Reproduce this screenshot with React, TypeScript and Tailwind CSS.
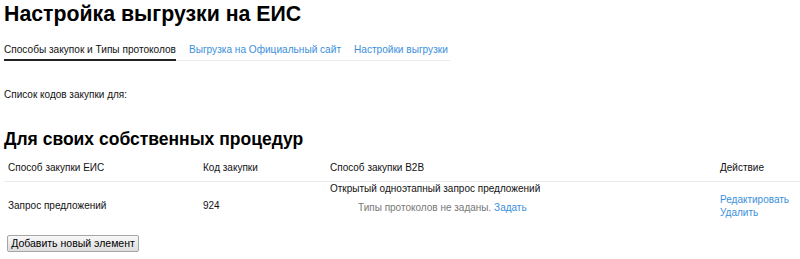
import React from "react";

export default function App() {
  const f = { fontFamily: '"Liberation Sans", Arial, sans-serif' };
  return (
    <div className="bg-white text-[#111] w-[800px] h-[259px] overflow-hidden" style={f}>
      <h1 className="text-[21.3px] leading-[26px] font-bold pl-[4px] pt-[1px] m-0 whitespace-nowrap text-black">
        Настройка выгрузки на ЕИС
      </h1>
      <div className="flex ml-[4px] mt-[16px] w-[446px] border-b border-[#ebebeb] text-[10.1px] whitespace-nowrap">
        <div className="pb-[2px] border-b-2 border-[#222] -mb-px leading-[14px]">Способы закупок и Типы протоколов</div>
        <div className="ml-[13px] text-[#3a8fdc] leading-[14px]">Выгрузка на Официальный сайт</div>
        <div className="ml-[13px] text-[#3a8fdc] leading-[14px]">Настройки выгрузки</div>
      </div>
      <div className="text-[10px] leading-[14px] pl-[4px] mt-[27px]">Список кодов закупки для:</div>
      <h2 className="text-[17.5px] leading-[22px] font-bold pl-[4px] mt-[26px] m-0 whitespace-nowrap text-black">
        Для своих собственных процедур
      </h2>
      <table className="ml-[4px] w-[796px] text-[10px] leading-[14px] border-collapse table-fixed">
        <colgroup>
          <col className="w-[195px]" />
          <col className="w-[127px]" />
          <col className="w-[390px]" />
          <col />
        </colgroup>
        <thead>
          <tr className="border-b border-[#ebebeb]">
            <th className="font-normal text-left px-[4px] pt-[11px] pb-[6px] align-top whitespace-nowrap">Способ закупки ЕИС</th>
            <th className="font-normal text-left px-[4px] pt-[11px] pb-[6px] align-top whitespace-nowrap">Код закупки</th>
            <th className="font-normal text-left px-[4px] pt-[11px] pb-[6px] align-top whitespace-nowrap">Способ закупки B2B</th>
            <th className="font-normal text-left px-[4px] pt-[11px] pb-[6px] align-top whitespace-nowrap">Действие</th>
          </tr>
        </thead>
        <tbody>
          <tr className="h-[48px]">
            <td className="px-[4px] align-middle whitespace-nowrap">Запрос предложений</td>
            <td className="px-[4px] align-middle">924</td>
            <td className="px-[4px] pt-[0px] align-top whitespace-nowrap">
              <div>Открытый одноэтапный запрос предложений</div>
              <div className="pl-[28px] mt-[5px] text-[#777]">
                Типы протоколов не заданы. <span className="text-[#3a8fdc]">Задать</span>
              </div>
            </td>
            <td className="px-[4px] align-middle whitespace-nowrap">
              <div className="leading-[13px] text-[#3a8fdc]">Редактировать</div>
              <div className="leading-[13px] text-[#3a8fdc]">Удалить</div>
            </td>
          </tr>
        </tbody>
      </table>
      <button className="block ml-[7px] mt-[5px] h-[17px] w-[132px] p-0 text-[10.5px] leading-[15px] text-black border border-[#a6a6a6] rounded-[2px] bg-gradient-to-b from-[#f8f8f8] to-[#dedede] whitespace-nowrap">
        Добавить новый элемент
      </button>
    </div>
  );
}
